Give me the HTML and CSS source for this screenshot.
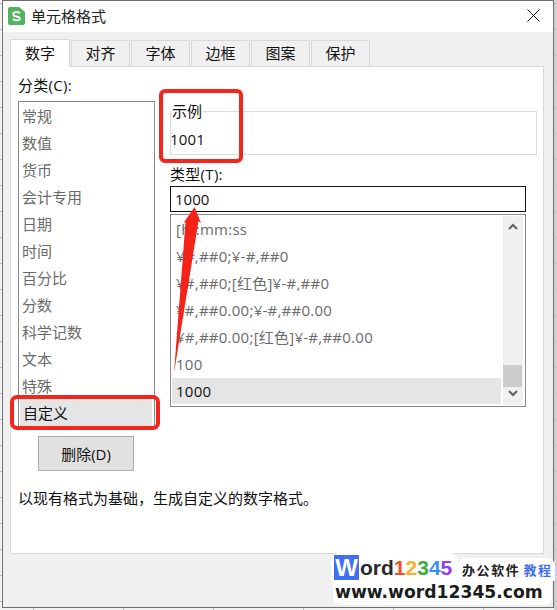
FILE: index.html
```html
<!doctype html>
<html lang="zh-CN">
<head>
    <meta charset="utf-8">
    <meta name="viewport" content="width=device-width, initial-scale=1">
    <title>单元格格式</title>
    <link rel="stylesheet" href="styles.css">
</head>
<body>
<div class="dialog">
    <div class="titlebar">
        <svg class="app-icon" width="17" height="18" viewBox="0 0 17 18">
            <path d="M2 0H11L17 5V16Q17 18 15 18H2Q0 18 0 16V2Q0 0 2 0Z" fill="#52b45c"/>
            <path d="M12 6.2Q10.8 5 8.6 5Q5.3 5 5.3 7.4Q5.3 9 8.5 9.5Q11.8 10 11.8 11.6Q11.8 13.4 8.6 13.4Q6.2 13.4 4.8 12" fill="none" stroke="#fff" stroke-width="1.8"/>
        </svg>
        <span class="title">单元格格式</span>
        <svg class="close" width="13" height="13" viewBox="0 0 13 13">
            <path d="M0.5 0.5L12.5 12.5M12.5 0.5L0.5 12.5" stroke="#111" stroke-width="1"/>
        </svg>
    </div>
    <div class="body">
        <div class="tabs">
            <div class="tab active">数字</div>
            <div class="tab">对齐</div>
            <div class="tab">字体</div>
            <div class="tab">边框</div>
            <div class="tab">图案</div>
            <div class="tab">保护</div>
        </div>
        <div class="panel">
            <div class="columns">
                <div class="left">
                    <div class="label">分类(C):</div>
                    <div class="category-list">
                        <div class="category">常规</div>
                        <div class="category">数值</div>
                        <div class="category">货币</div>
                        <div class="category">会计专用</div>
                        <div class="category">日期</div>
                        <div class="category">时间</div>
                        <div class="category">百分比</div>
                        <div class="category">分数</div>
                        <div class="category">科学记数</div>
                        <div class="category">文本</div>
                        <div class="category">特殊</div>
                        <div class="category selected">自定义</div>
                    </div>
                    <button class="delete">删除(D)</button>
                </div>
                <div class="right">
                    <div class="sample">
                        <span class="legend">示例</span>
                        <div class="sample-value">1001</div>
                    </div>
                    <div class="label type-label">类型(T):</div>
                    <div class="type-input">1000</div>
                    <div class="type-list">
                        <div class="rows">
                            <div class="row">[h]:mm:ss</div>
                            <div class="row">¥#,##0;¥-#,##0</div>
                            <div class="row">¥#,##0;[红色]¥-#,##0</div>
                            <div class="row">¥#,##0.00;¥-#,##0.00</div>
                            <div class="row">¥#,##0.00;[红色]¥-#,##0.00</div>
                            <div class="row">100</div>
                            <div class="row selected">1000</div>
                        </div>
                        <div class="scrollbar">
                            <svg width="10" height="7" viewBox="0 0 10 7"><path d="M1 6L5 2L9 6" fill="none" stroke="#606060" stroke-width="2"/></svg>
                            <div class="track"><div class="thumb"></div></div>
                            <svg width="10" height="7" viewBox="0 0 10 7"><path d="M1 1L5 5L9 1" fill="none" stroke="#606060" stroke-width="2"/></svg>
                        </div>
                    </div>
                </div>
            </div>
            <div class="desc">以现有格式为基础，生成自定义的数字格式。</div>
        </div>
    </div>
</div>

<!-- red marks drawn on top of the screenshot -->
<svg class="marks" width="557" height="610" viewBox="0 0 557 610">
    <rect x="161" y="91" width="80" height="70" rx="4" fill="none" stroke="#f4261c" stroke-width="4"/>
    <rect x="12" y="397" width="146" height="31" rx="5" fill="none" stroke="#f4261c" stroke-width="4"/>
    <path d="M174 373L185.500 222L183.500 223L194.500 207L201 223L198.500 221Z" fill="#f4231a"/>
</svg>

<div class="watermark">
    <div class="wm-top">
        <div class="wm-name">
            <span class="wm-w">W</span><span class="wm-ord">ord</span><span class="c1">1</span><span class="c2">2</span><span class="c3">3</span><span class="c4">4</span><span class="c5">5</span>
        </div>
        <div class="wm-slogan">
            <span class="wm-cn">办公软件</span><span class="wm-cn blue">教程</span>
        </div>
    </div>
    <div class="wm-url">www.word12345.com</div>
</div>
</body>
</html>
```

FILE: styles.css
```css
html {
    height: 100%;
}
body {
    margin: 0;
    width: 557px;
    height: 610px;
    overflow: hidden;
    position: relative;
    font-family: "Open Sans", "Noto Sans CJK SC", sans-serif;
    font-size: 15px;
    color: #111;
    background-color: #f2f2f2;
    background-image:
        repeating-linear-gradient(to bottom, transparent 0 3px, #bdbdbd 3px 4px, transparent 4px 26px),
        repeating-linear-gradient(to right, transparent 0 33px, #bdbdbd 33px 34px, transparent 34px 90px),
        linear-gradient(to right, transparent 554px, #d0d0d0 554px);
}
.dialog {
    width: 552px;
    height: 608px;
    margin-left: 2px;
    box-sizing: border-box;
    border: 1px solid #6f6f6f;
    display: flex;
    flex-direction: column;
    background: #f0f0f0;
}
.titlebar {
    height: 31px;
    flex: none;
    display: flex;
    align-items: center;
    box-sizing: border-box;
    padding: 0 13px 2px 5px;
    background: #fff;
}
.app-icon {
    margin-right: 6px;
}
.title {
    flex: 1;
    color: #222;
}
.body {
    flex: 1;
    padding: 7px 9px 0 7px;
}
.tabs {
    display: flex;
    height: 27px;
    align-items: flex-end;
}
.tab {
    width: 59px;
    height: 26px;
    line-height: 24px;
    box-sizing: border-box;
    margin-right: 1px;
    text-align: center;
    border: 1px solid #d9d9d9;
    border-bottom: none;
    background: #f0f0f0;
}
.tab.active {
    height: 28px;
    line-height: 26px;
    margin-bottom: -1px;
    background: #fff;
    position: relative;
    z-index: 1;
    width: 60px;
}
.panel {
    height: 488px;
    box-sizing: border-box;
    border: 1px solid #d9d9d9;
    background: #fff;
    padding: 8px 7px 0;
}
.columns {
    display: flex;
    gap: 15px;
}
.left {
    width: 137px;
    flex: none;
}
.label {
    line-height: 20px;
    letter-spacing: 0.3px;
}
.category-list {
    margin-top: 6px;
    border: 1px solid #8a8a8a;
    padding: 0 2px 0 0;
    height: 326px;
    box-sizing: border-box;
}
.category {
    height: 27px;
    line-height: 28px;
    padding-left: 3px;
    color: #6a6a6a;
}
.category.selected {
    margin-left: 1px;
    line-height: 29px;
    background: #e5e5e5;
    color: #111;
}
.delete {
    display: block;
    margin: 9px 0 0 20px;
    width: 96px;
    height: 35px;
    border: 1px solid #adadad;
    background: #e1e1e1;
    font: inherit;
    color: #111;
    padding: 0;
}
.right {
    flex: 1;
    padding-top: 36px;
}
.sample {
    position: relative;
    width: 367px;
    height: 44px;
    box-sizing: border-box;
    border: 1px solid #dcdcdc;
    padding: 16px 0 0 0;
}
.legend {
    position: absolute;
    left: 0;
    top: -11px;
    line-height: 20px;
    padding: 0 1px;
    background: #fff;
}
.sample-value {
    line-height: 22px;
    margin-left: -1px;
    letter-spacing: 0.2px;
}
.type-label {
    margin-top: 9px;
}
.type-input {
    width: 356px;
    height: 26px;
    margin-top: 2px;
    box-sizing: border-box;
    border: 1px solid #111;
    line-height: 24px;
    padding-left: 4px;
}
.type-list {
    width: 356px;
    height: 193px;
    margin-top: 2px;
    box-sizing: border-box;
    border: 1px solid #8a8a8a;
    padding: 1px 2px 1px 1px;
    display: flex;
    gap: 2px;
}
.rows {
    flex: 1;
}
.row {
    height: 27px;
    line-height: 27px;
    padding-left: 4px;
    color: #6a6a6a;
    letter-spacing: 0.25px;
}
.row.selected {
    height: 26px;
    background: #e5e5e5;
    color: #111;
}
.scrollbar {
    width: 20px;
    flex: none;
    background: #f0f0f0;
    display: flex;
    flex-direction: column;
    align-items: center;
    padding-top: 7px;
    padding-bottom: 8px;
    box-sizing: border-box;
}
.track {
    flex: 1;
    width: 100%;
    position: relative;
}
.thumb {
    position: absolute;
    left: 0;
    right: 1px;
    bottom: 3px;
    height: 22px;
    background: #cdcdcd;
}
.desc {
    margin-top: 17px;
    line-height: 20px;
}
.marks {
    position: absolute;
    left: 0;
    top: 0;
    pointer-events: none;
}
.watermark {
    position: absolute;
    left: 331px;
    top: 553px;
    width: 224px;
    font-family: "DejaVu Sans", "Noto Sans CJK SC", sans-serif;
    font-weight: bold;
}
.wm-top {
    display: flex;
    height: 28px;
    font-family: "Liberation Sans", "Noto Sans CJK SC", sans-serif;
}
.wm-name {
    display: flex;
    align-items: center;
    width: 127px;
    box-sizing: border-box;
    padding: 2px 0 1px 3px;
    background: #fff;
    border-radius: 8px 8px 0 0;
    font-size: 21px;
    color: #2a2a2a;
}
.wm-w {
    width: 25px;
    height: 25px;
    line-height: 25px;
    text-align: center;
    background: #3f6ff2;
    color: #fff;
    font-size: 24px;
}
.wm-ord {
    margin-left: 1px;
}
.c1 { color: #f4511e; }
.c2 { color: #fbb02d; }
.c3 { color: #43a83d; }
.c4 { color: #3c8ff0; }
.c5 { color: #8b3ff0; }
.wm-slogan {
    flex: 1;
    height: 23px;
    margin-top: 5px;
    display: flex;
    align-items: center;
    padding-left: 4px;
    background: #fff;
    border-radius: 8px 8px 0 0;
}
.wm-cn {
    font-size: 13px;
    letter-spacing: 1.6px;
    color: #222;
}
.wm-cn.blue {
    color: #3f6ff2;
    margin-left: 3px;
}
.wm-url {
    width: 219px;
    margin-left: 2px;
    height: 24px;
    box-sizing: border-box;
    padding-left: 2px;
    background: #fff;
    border-radius: 0 0 8px 8px;
    font-size: 17.2px;
    line-height: 23px;
    color: #1c1c1c;
}
```
